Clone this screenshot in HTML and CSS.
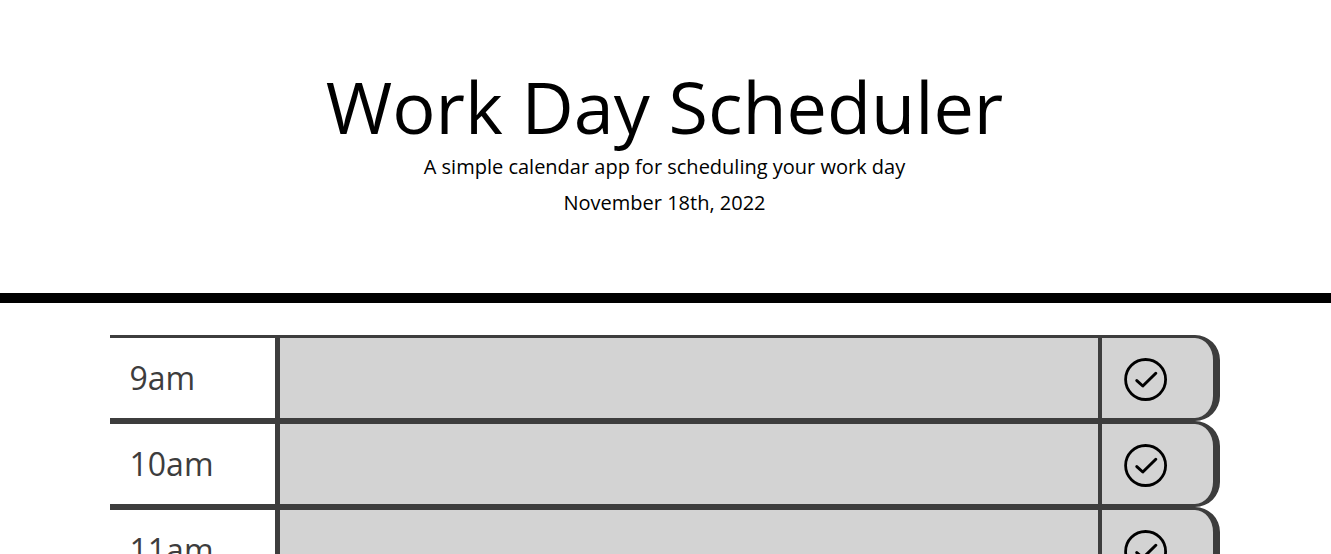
FILE: index.html
```html
<!DOCTYPE html>
<html lang="en">
<head>
<meta charset="utf-8">
<title>Work Day Scheduler</title>
<link rel="stylesheet" href="styles.css">
</head>
<body>
<header class="header">
<h1 class="title">Work Day Scheduler</h1>
<p class="lead">A simple calendar app for scheduling your work day</p>
<p class="lead">November 18th, 2022</p>
</header>
<main class="container">
<section class="row"><div class="hour">9am</div><div class="entry"></div><button class="save" aria-label="Save"><svg class="icon" viewBox="0 0 44 44"><circle cx="21.6" cy="21.5" r="20"/><path class="check" d="M12.8 22.6l6 5.4 13-12.7"/></svg></button></section>
<section class="row"><div class="hour">10am</div><div class="entry"></div><button class="save" aria-label="Save"><svg class="icon" viewBox="0 0 44 44"><circle cx="21.6" cy="21.5" r="20"/><path class="check" d="M12.8 22.6l6 5.4 13-12.7"/></svg></button></section>
<section class="row"><div class="hour">11am</div><div class="entry"></div><button class="save" aria-label="Save"><svg class="icon" viewBox="0 0 44 44"><circle cx="21.6" cy="21.5" r="20"/><path class="check" d="M12.8 22.6l6 5.4 13-12.7"/></svg></button></section>
</main>
</body>
</html>
```
FILE: styles.css
```css
* { box-sizing: border-box; }
body { margin: 0; height: 554px; overflow: hidden; background: #fff; color: #000; font-family: "Open Sans", sans-serif; }
.header { height: 303px; padding: 63px 2px 0 0; border-bottom: 10px solid #000; text-align: center; }
.title { margin: 0 0 3px; font-size: 72px; font-weight: 400; line-height: 86px; }
.lead { margin: 0 0 6px; font-size: 20px; font-weight: 400; line-height: 30px; }
.container { width: 1110px; margin: 32px auto 0 110px; }
.row { display: flex; height: 86px; }
.hour { width: 165px; padding: 0 20px 0 19.5px; border-top: 3px solid #3d3d3d; border-bottom: 3px solid #3d3d3d; color: #3d3d3d; font-size: 32px; line-height: 80px; }
.entry { flex: 1; border: 3px solid #3d3d3d; border-left-width: 5px; border-right: 0; background: #d3d3d3; }
.save { width: 122px; padding: 3px 0 0 22px; border: 3px solid #3d3d3d; border-left-width: 4px; border-right-width: 7px; border-radius: 0 25px 25px 0; background: #d3d3d3; text-align: left; }
.icon { display: block; width: 44px; height: 44px; fill: none; stroke: #000; stroke-width: 2.8; stroke-linecap: round; stroke-linejoin: round; }
.check { stroke-width: 3; }
```
